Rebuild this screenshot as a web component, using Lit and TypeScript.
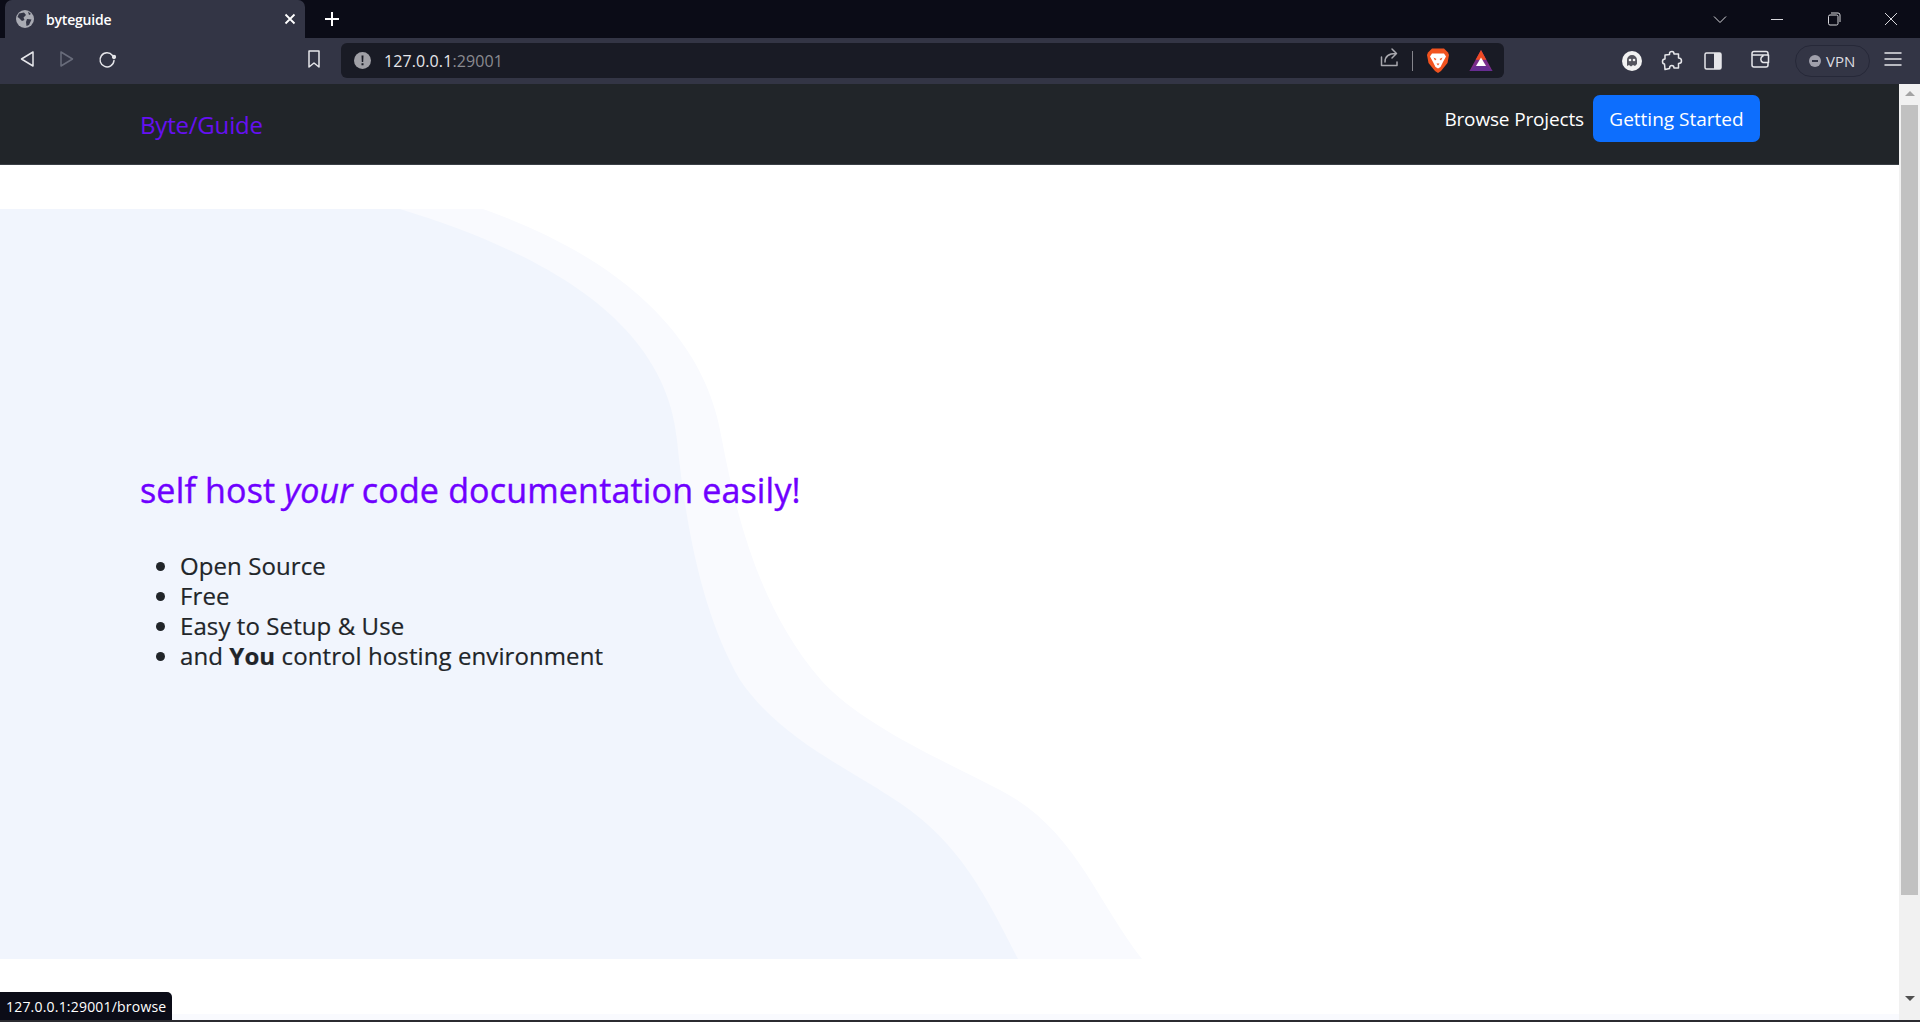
import { LitElement, html, css, svg } from "lit";
import { customElement } from "lit/decorators.js";

// wave outlines traced from the reference, y is relative to the top of the hero
const INNER = "M0 0H400C530 40 665 105 677 231C687 330 705 410 740 471C780 530 850 560 900 594C960 635 985 685 1018 750H0Z";
const OUTER = "M0 0H483C610 45 705 120 722 231C737 310 760 400 821 471C860 515 940 550 1000 581C1075 620 1095 690 1142 750H0Z";

const icon = (content: unknown) => html`<svg class="ico" viewBox="0 0 24 24" fill="none" stroke="currentColor" stroke-width="1.5" stroke-linejoin="round" stroke-linecap="round">${content}</svg>`;

@customElement("browser-chrome")
class BrowserChrome extends LitElement {
  static styles = css`
    :host {
      display: block;
      font-family: "Open Sans", "Noto Sans", sans-serif;
      color: #fff;
    }
    .tabs {
      height: 38px;
      background: #0b0c17;
      display: flex;
      align-items: flex-end;
      padding-left: 5px;
    }
    .tab {
      width: 300px;
      height: 38px;
      box-sizing: border-box;
      background: #333545;
      border-radius: 7px 7px 0 0;
      display: flex;
      align-items: center;
      padding: 0 9px 0 11px;
      font-size: 14px;
      font-weight: 600;
      letter-spacing: -0.2px;
    }
    .tab .globe {
      width: 18px;
      height: 18px;
      margin-right: 12px;
    }
    .tab .title {
      flex: 1;
    }
    .tab .close {
      width: 12px;
      height: 12px;
    }
    .plus {
      width: 18px;
      height: 18px;
      margin: 0 0 10px 18px;
    }
    .winbtns {
      margin-left: auto;
      display: flex;
      align-self: stretch;
      align-items: center;
      color: #d8d8dc;
    }
    .winbtns svg {
      width: 14px;
      height: 14px;
      margin-right: 43px;
    }
    .winbtns svg:last-child {
      margin-right: 22px;
    }
    .bar {
      height: 46px;
      background: #333545;
      display: flex;
      align-items: center;
      padding-left: 15px;
      color: #e6e6ea;
    }
    .ico {
      width: 24px;
      height: 24px;
      flex: none;
    }
    .nav {
      margin-right: 16px;
    }
    .dim {
      color: #696c7b;
    }
    .mark {
      margin: 0 15px 0 167px;
    }
    .url {
      width: 1163px;
      height: 35px;
      margin-top: -1px;
      background: #191b25;
      border-radius: 6px;
      display: flex;
      align-items: center;
      padding-left: 13px;
      box-sizing: border-box;
      font-size: 16px;
      letter-spacing: 0.1px;
    }
    .url .info {
      width: 17px;
      height: 17px;
      margin-right: 13px;
    }
    .url .port {
      color: #8a8a90;
    }
    .url .share {
      margin-left: auto;
      margin-right: -2px;
      color: #a8a8ae;
    }
    .sep {
      width: 1px;
      height: 20px;
      background: #85858c;
      margin: 0 13px 0 13px;
    }
    .shield {
      width: 24px;
      height: 27px;
      margin-right: 19px;
    }
    .bat {
      width: 24px;
      height: 24px;
      margin-right: 11px;
    }
    .ext {
      margin-left: 118px;
      display: flex;
      align-items: center;
      gap: 17px;
    }
    .ext .ghost {
      width: 20px;
      height: 20px;
      margin-right: 1px;
    }
    .ext .wallet {
      margin-left: 6px;
    }
    .vpn {
      width: 75px;
      height: 32px;
      box-sizing: border-box;
      margin-left: 23px;
      border: 1px solid #262838;
      border-radius: 16px;
      display: flex;
      align-items: center;
      padding-left: 13px;
      font-size: 15px;
      color: #dcdce0;
    }
    .vpn i {
      width: 12px;
      height: 12px;
      border-radius: 50%;
      background: #a0a0ab;
      margin-right: 5px;
      position: relative;
    }
    .vpn i::after {
      content: "";
      position: absolute;
      left: 3px;
      right: 3px;
      top: 5px;
      height: 2px;
      background: #333545;
    }
    .menu {
      margin-left: 11px;
    }
  `;

  render() {
    return html`
      <div class="tabs">
        <div class="tab">
          <svg class="globe" viewBox="0 0 18 18">
            <circle cx="9" cy="9" r="9" fill="#a9abb3"></circle>
            <path d="M3 3.5 L8 2.5 L10 5 L7.5 7.5 L8.5 10 L6 11 L3 8 L1.5 7Z M11 9 L15.5 9.5 L13 15 L10.5 16 L10 12Z M12 1.5 L15 4 L13 5 Z" fill="#333545"></path>
          </svg>
          <span class="title">byteguide</span>
          <svg class="close" viewBox="0 0 12 12" stroke="#fff" stroke-width="1.8"><path d="M1.5 1.5L10.5 10.5M10.5 1.5L1.5 10.5"></path></svg>
        </div>
        <svg class="plus" viewBox="0 0 18 18" stroke="#fff" stroke-width="2"><path d="M9 2V16M2 9H16"></path></svg>
        <div class="winbtns">
          <svg viewBox="0 0 14 14" fill="none" stroke="currentColor"><path d="M1 4.5L7 10.5L13 4.5"></path></svg>
          <svg viewBox="0 0 14 14" fill="none" stroke="currentColor"><path d="M1 7.5H13"></path></svg>
          <svg viewBox="0 0 14 14" fill="none" stroke="currentColor"><rect x="1.5" y="3" width="9.5" height="10" rx="1.5"></rect><path d="M4 1H11A2 2 0 0 1 13 3V10"></path></svg>
          <svg viewBox="0 0 14 14" fill="none" stroke="currentColor"><path d="M1 1L13 13M13 1L1 13"></path></svg>
        </div>
      </div>
      <div class="bar">
        <span class="nav">${icon(svg`<path d="M18 5V19L6.5 12Z"></path>`)}</span>
        <span class="nav dim">${icon(svg`<path d="M6 5V19L17.5 12Z"></path>`)}</span>
        <span class="nav">${icon(svg`<path d="M17.5 8.5A7 7 0 1 0 19 13.5"></path><circle cx="19" cy="10" r="1.4" fill="currentColor"></circle>`)}</span>
        <span class="mark">${icon(svg`<path d="M7 4H17V20L12 16L7 20Z"></path>`)}</span>
        <div class="url">
          <svg class="info" viewBox="0 0 17 17">
            <circle cx="8.5" cy="8.5" r="8.5" fill="#a0a0a6"></circle>
            <path d="M7.5 3.5H9.5L9.2 10H7.8Z M7.5 11.2H9.5V13.2H7.5Z" fill="#191b25"></path>
          </svg>
          <span>127.0.0.1<span class="port">:29001</span></span>
          <span class="share">${icon(svg`<path d="M4.500 11V19.500H20V16M8 16C8 10 12 7.500 19 7.500M15 3L19.500 7.500L15 12"></path>`)}</span>
          <span class="sep"></span>
          <svg class="shield" viewBox="0 0 24 27">
            <path d="M6 1.500H18L22 5.500L23 8L21.500 16L15 24L12 26L9 24L2.500 16L1 8L2 5.500Z" fill="#f1531f"></path>
            <path d="M6 6.500H18L20 9.500L17 15L14.500 20L12 21.500L9.500 20L7 15L4 9.500Z" fill="#fff"></path>
            <path d="M7.500 10.500L10.500 12L9 13.500Z M16.500 10.500L13.500 12L15 13.500Z M10.500 16.500H13.500L12 18.500Z" fill="#f1531f"></path>
          </svg>
          <svg class="bat" viewBox="0 0 24 24">
            <path d="M12 1L23.500 22H0.500Z" fill="#7b2d8b"></path>
            <path d="M12 1L17.300 10.800H6.700L0.500 22Z" fill="#f04b23"></path>
            <path d="M0.500 22L6 17H18L23.500 22Z" fill="#662d91"></path>
            <path d="M12 8.500L17 17H7Z" fill="#fff"></path>
          </svg>
        </div>
        <div class="ext">
          <svg class="ghost" viewBox="0 0 20 20">
            <circle cx="10" cy="10" r="10" fill="#f2f2f2"></circle>
            <path d="M5 15V9A5 5 0 0 1 15 9V13L13 15L11 14L9 15.500L7 14Z" fill="#55555e"></path>
            <circle cx="8" cy="9" r="1.300" fill="#f2f2f2"></circle>
            <circle cx="12" cy="9" r="1.300" fill="#f2f2f2"></circle>
          </svg>
          ${icon(svg`<path d="M9.500 4.500C9.500 3 10.500 2.500 12 2.500C13.500 2.500 14 3.500 14 5H18.500V9C20.500 9 21.500 10.300 21.500 12C21.500 13.700 20.500 14.500 18.500 14.500V19H14C14 17.500 13.200 16.500 11.800 16.500C10.300 16.500 9.500 17.500 9.500 19.500L5 20.500L4.500 15C3.500 15 2.500 14 2.500 12.500C2.500 11 3.500 10 5 10V6L9.500 5.500Z"></path>`)}
          ${icon(svg`<rect x="4" y="4" width="16" height="16" rx="1.500"></rect><path d="M13 4H20V20H13Z" fill="currentColor" stroke="none"></path>`)}
          <span class="wallet">${icon(svg`<path d="M20 8V6.500C20 5 19 4.500 18 4.500H6C4.500 4.500 4 5.500 4 6.500V18C4 19.500 5 20 6 20H18C19 20 20 19.500 20 18V16"></path><path d="M4.500 8H20.500V15.500H15A3.500 3.500 0 0 1 15 9"></path>`)}</span>
        </div>
        <div class="vpn"><i></i>VPN</div>
        <span class="menu">${icon(svg`<path d="M4 6H20M4 12H20M4 18H20"></path>`)}</span>
      </div>
    `;
  }
}

@customElement("app-root")
class AppRoot extends LitElement {
  static styles = css`
    :host {
      display: block;
      height: 1022px;
      overflow: hidden;
      position: relative;
      background: #fff;
      font-family: "Open Sans", "Noto Sans", sans-serif;
      color: #212529;
    }
    .page {
      display: flex;
      height: 938px;
    }
    .content {
      flex: 1;
      min-width: 0;
    }
    .navbar {
      height: 80px;
      background: #212529;
      border-bottom: 1px solid #3a3f45;
      display: flex;
      align-items: center;
      padding: 0 139px 0 140px;
    }
    .brand {
      color: #6610f2;
      font-size: 24px;
      letter-spacing: -0.2px;
    }
    .links {
      margin-left: auto;
      display: flex;
      align-items: center;
      gap: 9px;
      margin-top: -11px;
    }
    .link {
      color: #fff;
      font-size: 19px;
      letter-spacing: -0.15px;
    }
    .btn {
      height: 47px;
      width: 167px;
      box-sizing: border-box;
      background: #0d6efd;
      color: #fff;
      border-radius: 7px;
      font-size: 19px;
      display: flex;
      align-items: center;
      justify-content: center;
    }
    .hero {
      position: relative;
      height: 750px;
      margin-top: 44px;
      padding-left: 140px;
      padding-bottom: 30px;
      box-sizing: border-box;
      display: flex;
      flex-direction: column;
      justify-content: center;
    }
    .waves {
      position: absolute;
      left: 0;
      top: 0;
      width: 1200px;
      height: 750px;
    }
    h1 {
      position: relative;
      margin: 0 0 39px;
      color: #6f00ff;
      font-size: 34px;
      font-weight: 400;
      line-height: 44px;
      letter-spacing: 0.17px;
      -webkit-text-stroke: 0.4px #6f00ff;
    }
    ul {
      position: relative;
      margin: 0;
      padding: 0 0 0 40px;
      font-size: 24px;
      line-height: 30px;
      letter-spacing: 0.09px;
      -webkit-text-stroke: 0.2px #212529;
    }
    .next {
      height: 6px;
      margin-top: 55px;
      background: #f9fafe;
    }
    .scrollbar {
      width: 21px;
      flex: none;
      background: #f1f1f1;
      display: flex;
      flex-direction: column;
      align-items: center;
      padding-top: 7px;
      box-sizing: border-box;
    }
    .arrow {
      width: 0;
      height: 0;
      border-left: 5px solid transparent;
      border-right: 5px solid transparent;
    }
    .up {
      border-bottom: 5px solid #a3a3a3;
    }
    .down {
      border-top: 5px solid #505050;
      margin-top: 101px;
    }
    .thumb {
      width: 17px;
      height: 790px;
      background: #c1c1c1;
      margin-top: 9px;
    }
    .status {
      position: absolute;
      left: 0;
      bottom: 2px;
      height: 28px;
      padding: 0 6px;
      display: flex;
      align-items: center;
      background: #0b0c17;
      border-radius: 0 5px 0 0;
      color: #fff;
      font-size: 14px;
      letter-spacing: 0.2px;
    }
    .edge {
      position: absolute;
      left: 0;
      right: 0;
      bottom: 0;
      height: 2px;
      background: #2b2b30;
    }
  `;

  render() {
    return html`
      <browser-chrome></browser-chrome>
      <div class="page">
        <div class="content">
          <nav class="navbar">
            <span class="brand">Byte/Guide</span>
            <div class="links">
              <span class="link">Browse Projects</span>
              <span class="btn">Getting Started</span>
            </div>
          </nav>
          <section class="hero">
            <svg class="waves" viewBox="0 0 1200 750">
              <path d=${OUTER} fill="#f9fafe"></path>
              <path d=${INNER} fill="#f1f5fd"></path>
            </svg>
            <h1>self host <em>your</em> code documentation easily!</h1>
            <ul>
              <li>Open Source</li>
              <li>Free</li>
              <li>Easy to Setup &amp; Use</li>
              <li>and <b>You</b> control hosting environment</li>
            </ul>
          </section>
          <div class="next"></div>
        </div>
        <div class="scrollbar">
          <span class="arrow up"></span>
          <span class="thumb"></span>
          <span class="arrow down"></span>
        </div>
      </div>
      <div class="status">127.0.0.1:29001/browse</div>
      <div class="edge"></div>
    `;
  }
}
